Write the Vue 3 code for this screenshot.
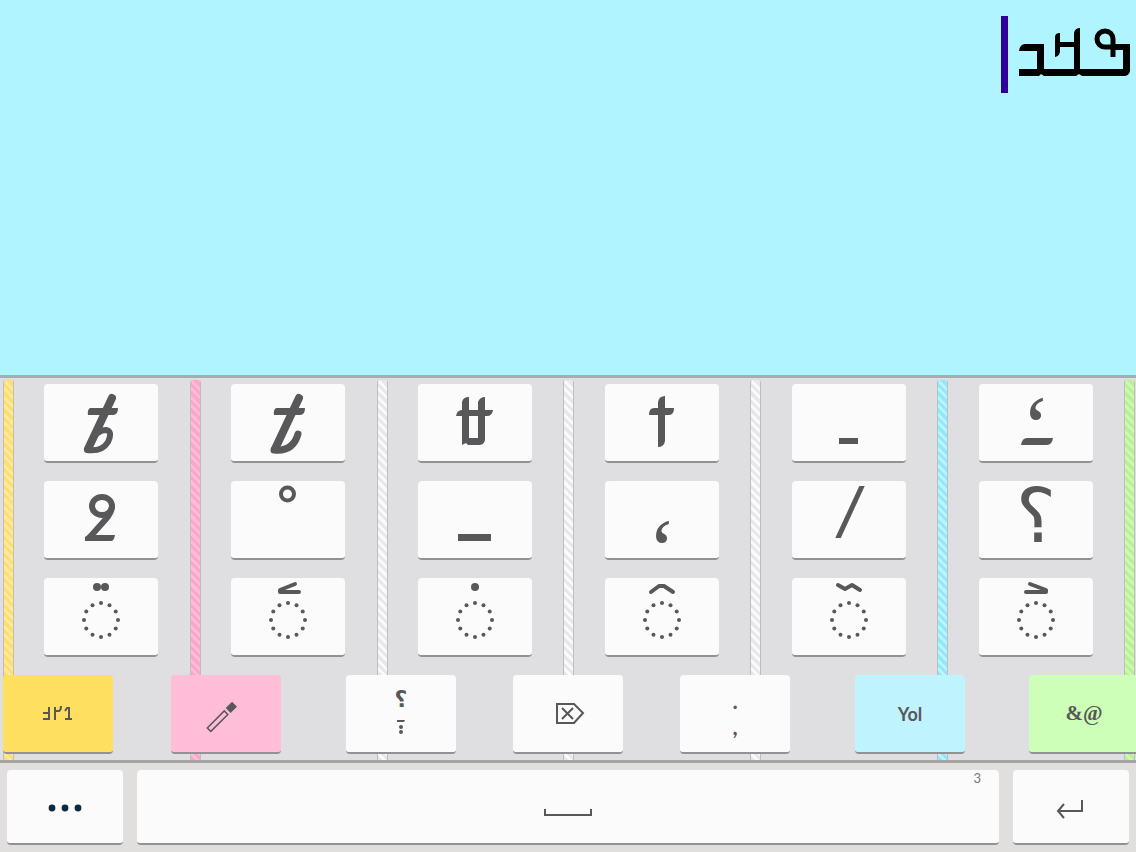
<script setup>
const ring = Array.from({ length: 12 }, (_, i) => {
  const a = (i * Math.PI) / 6
  return { x: 57 + 17 * Math.cos(a), y: 42 + 17 * Math.sin(a) }
})

const strips = ['gold', 'pink', 'plain', 'plain', 'plain', 'aqua', 'lime']

// s: stroked lines [path, width], r: the same with round ends, f: filled shapes,
// c: dots [cx, cy, r], t: characters [text, x, y, size, class]
const letterRows = [
  [
    { name: 'tb', r: [['M68 14 L44 65', 8], ['M43 66 Q58 68 64 58 Q69 47 62 46 Q57 46 51 51', 6]], f: ['M46 24 H74 Q74 31 69 31 H44 Q43 26 46 24Z'] },
    { name: 't', r: [['M68 14 L44 65', 8], ['M43 66 Q62 68 67 50', 7]], f: ['M45 24 H74 Q74 31 69 31 H43 Q42 26 45 24Z'] },
    { name: 'double t', f: ['M44 61 V18 Q45 13 51 13 V54 H60 V18 Q62 13 67 13 V56 Q66 61 61 61 H50 L48 59Z', 'M38 32 Q39 26 44 26 H75 Q74 32 69 32Z'] },
    { name: 'cross', f: ['M53 63 V18 Q54 12 60 12 V57 Q59 63 53 63Z', 'M44 31 Q44 24 49 24 H69 Q69 31 64 31Z'] },
    { name: 'hyphen', f: ['M47 54 H66 V60 H47Z'] },
    { name: 'raised comma', t: [['‘', 57, 72, 86, 'serif']], f: ['M42 61 Q43 54 48 54 H74 Q73 61 68 61Z'] }
  ],
  [
    { name: 'two', f: ['M41 60 V56 L44 54 H71 Q70 60 67 60Z'], s: [['M48 25 A10 9 0 1 1 68 25 A10 9 0 1 1 48 25', 6], ['M68 25 Q68 31 62 38 L45 57', 6]] },
    { name: 'ring', s: [['M50 13 A6 6 0 1 1 63 13 A6 6 0 1 1 50 13', 4]] },
    { name: 'underscore', f: ['M40 53 H73 V60 H40Z'] },
    { name: 'comma', t: [['‘', 57, 98, 86, 'serif']] },
    { name: 'slash', t: [['/', 57, 56, 70, 'slash']] },
    { name: 'question', t: [['؟', 57, 61, 76, 'ask']] }
  ],
  [
    { name: 'two dots', ring: true, c: [[53, 9, 4], [61, 9, 4]] },
    { name: 'left angle', ring: true, r: [['M64 6 L49 12 V14 H68', 4]] },
    { name: 'dot', ring: true, c: [[57, 9, 4]] },
    { name: 'circumflex', ring: true, r: [['M46 14 L54 8 H59 L68 14', 4]] },
    { name: 'tilde', ring: true, r: [['M46 7 L53 11 L60 7 L68 12', 4]] },
    { name: 'right angle', ring: true, r: [['M51 6 L67 12 V14 H47', 4]] }
  ]
]
</script>

<template>
  <main class="screen">
    <section class="editor" role="textbox" aria-label="Text" tabindex="0">
      <i class="caret"></i>
      <svg class="written" viewBox="0 0 113 77" width="113" height="77" aria-hidden="true">
        <path d="M1 35 Q2 28 7 28 H26 V53 H56 V17 Q57 12 62 12 V53 H105 V34 H95 V28 H112 V55 Q111 60 106 60 H64 L61 58 L58 60 H26 L23 58 L21 60 H1 V53 H19 V35Z" />
        <path d="M37 41 V21 Q37 17 42 17 V26 H56 V31 H42 V35 Q42 40 37 41Z" />
        <path class="line" d="M95 41 V23 A8 8 0 1 0 87 31 H108" stroke-width="5" />
      </svg>
    </section>

    <section class="board">
      <div class="strips">
        <i v-for="(s, i) in strips" :key="i" :class="['strip', s]"></i>
      </div>

      <div v-for="(row, i) in letterRows" :key="i" class="letters">
        <button v-for="k in row" :key="k.name" class="key letter" type="button" :aria-label="k.name">
          <svg viewBox="0 0 114 77" width="114" height="77">
            <path v-for="d in k.f || []" :key="d" :d="d" />
            <path v-for="p in k.s || []" :key="p[0]" class="line" :d="p[0]" :stroke-width="p[1]" />
            <path v-for="p in k.r || []" :key="p[0]" class="line round" :d="p[0]" :stroke-width="p[1]" />
            <circle v-for="c in k.c || []" :key="c[0]" :cx="c[0]" :cy="c[1]" :r="c[2]" />
            <text v-for="t in k.t || []" :key="t[0]" :class="t[4]" :x="t[1]" :y="t[2]" :font-size="t[3]">{{ t[0] }}</text>
            <template v-if="k.ring">
              <circle v-for="(d, n) in ring" :key="'r' + n" :cx="d.x" :cy="d.y" r="2" />
            </template>
          </svg>
        </button>
      </div>

      <div class="modes">
        <div class="group two near">
          <button class="key gold-key" type="button" aria-label="Letters">
            <svg viewBox="0 0 110 77" width="110" height="77">
              <path class="line" stroke-width="2" d="M46 32 V45 M40 38 H46 M40 44 H46 M52 32 V45 M52 36 H56 Q58 35 58 31 M66 32 V44 M62 44 H69 M66 33 H64 L62 36" />
            </svg>
          </button>
          <button class="key pink-key" type="button" aria-label="Pen">
            <svg viewBox="0 0 110 77" width="110" height="77">
              <g transform="translate(37 55) rotate(-45)">
                <rect class="line" x="1" y="-2" width="24" height="5" stroke-width="1.5" />
                <rect x="28" y="-3" width="9" height="7" />
              </g>
            </svg>
          </button>
        </div>
        <div class="group three">
          <button class="key" type="button" aria-label="Question marks">
            <svg viewBox="0 0 110 77" width="110" height="77">
              <text class="ask strong" x="55" y="32" font-size="22">؟</text>
              <path d="M51 45 H59 L58 47 H51Z" />
              <circle cx="55" cy="52" r="2" />
              <circle cx="55" cy="57" r="2" />
            </svg>
          </button>
          <button class="key" type="button" aria-label="Delete">
            <svg viewBox="0 0 110 77" width="110" height="77">
              <path class="line" stroke-width="2" d="M44 29 H61 L70 38 L61 48 H44Z M49 33 L60 44 M60 33 L49 44" />
            </svg>
          </button>
          <button class="key stack" type="button"><span>.</span><span>,</span></button>
        </div>
        <div class="group two far">
          <button class="key aqua-key latin" type="button">Yol</button>
          <button class="key lime-key signs" type="button">&amp;@</button>
        </div>
      </div>
    </section>

    <section class="bar">
      <button class="key" type="button" aria-label="More">
        <svg class="navy" viewBox="0 0 116 73" width="116" height="73">
          <circle cx="45" cy="38" r="3.4" />
          <circle cx="58" cy="38" r="3.4" />
          <circle cx="71" cy="38" r="3.4" />
        </svg>
      </button>
      <button class="key space" type="button" aria-label="Space">
        <svg viewBox="0 0 116 73" width="116" height="73">
          <path class="line" stroke-width="2" d="M35 39 V45 H81 V39" />
        </svg>
        <span class="count">3</span>
      </button>
      <button class="key" type="button" aria-label="Enter">
        <svg viewBox="0 0 116 73" width="116" height="73">
          <path class="line" stroke-width="2" d="M69 30 V41 H45 M51 34 L45 41 L51 48" />
        </svg>
      </button>
    </section>
  </main>
</template>

<style>
body { margin: 0; }
</style>

<style scoped>
.screen {
  min-height: 100vh;
  display: flex;
  flex-direction: column;
  background: #b0f4ff;
  font-family: Lato, "Liberation Sans", sans-serif;
  color: #58585a;
}
.editor {
  flex: 1;
  display: flex;
  justify-content: flex-end;
  align-items: flex-start;
  gap: 10px;
  padding: 16px 5px 0 0;
  outline: none;
}
.caret { width: 7px; height: 77px; background: #310098; }
.written { color: #000; }
svg { display: block; fill: currentColor; flex: none; overflow: visible; }
.line { fill: none; stroke: currentColor; }
.round { stroke-linecap: round; stroke-linejoin: round; }
text { text-anchor: middle; }
.serif { font-family: "Liberation Serif", serif; }
.slash { font-family: "Liberation Sans", sans-serif; font-style: italic; }
.ask { font-family: "DejaVu Serif", "DejaVu Sans", serif; }
.strong { font-weight: 700; }

.board {
  position: relative;
  overflow: hidden;
  background: #dfdfe2;
  border-top: 3px solid #a7abb2;
  border-bottom: 3px solid #a3a3a3;
  padding: 6px 0;
  display: grid;
  gap: 18px;
}
.strips {
  position: absolute;
  inset: 2px 1px 0 3px;
  display: flex;
  justify-content: space-between;
}
.strip {
  width: 9px;
  border-left: 1px solid #bdbdc2;
  border-right: 1px solid #bdbdc2;
  border-radius: 3px 3px 0 0;
}
.gold { background: repeating-linear-gradient(45deg, #ffdf6c 0 3px, #ffe89b 3px 6px); }
.pink { background: repeating-linear-gradient(45deg, #ffa5ca 0 3px, #ffbdd8 3px 6px); }
.plain { background: repeating-linear-gradient(45deg, #e8e8e8 0 3px, #fafafa 3px 6px); }
.aqua { background: repeating-linear-gradient(45deg, #8ceafc 0 3px, #bdf3ff 3px 6px); }
.lime { background: repeating-linear-gradient(45deg, #b8f094 0 3px, #cdf8b2 3px 6px); }

.letters {
  position: relative;
  display: grid;
  grid-template-columns: repeat(6, 1fr);
  justify-items: center;
  padding: 0 7px 0 8px;
}
.key {
  display: flex;
  align-items: center;
  justify-content: center;
  min-width: 0;
  margin: 0;
  padding: 0;
  border: 0;
  border-bottom: 2px solid #929294;
  border-radius: 4px;
  background: #fbfbfc;
  color: inherit;
  font-family: inherit;
}
.letter { width: 61%; }
.modes {
  position: relative;
  display: grid;
  grid-template-columns: 278fr 444fr 284fr;
  gap: 65px;
  margin: 0 -3px 0 3px;
}
.group { display: grid; }
.two { grid-template-columns: 1fr 1fr; }
.three { grid-template-columns: 1fr 1fr 1fr; gap: 57px; }
.near { gap: 58px; }
.far { gap: 64px; }
.gold-key { background: #ffdf5f; }
.pink-key { background: #ffbdd8; }
.aqua-key { background: #bff4ff; }
.lime-key { background: #ceffb8; }
.latin { font-size: 18px; font-weight: 700; }
.signs { font-family: "Liberation Serif", serif; font-size: 21px; font-weight: 700; }
.stack { flex-direction: column; font-size: 22px; font-weight: 700; line-height: 26px; color: #58585a; }

.bar {
  display: grid;
  grid-template-columns: 116fr 863fr 116fr;
  gap: 14px;
  padding: 7px;
  background: #e0dfdd;
}
.space { position: relative; }
.count {
  position: absolute;
  top: 0;
  right: 18px;
  font-size: 13px;
  line-height: 16px;
  color: #777;
}
.navy { color: #0c2a40; }
</style>
